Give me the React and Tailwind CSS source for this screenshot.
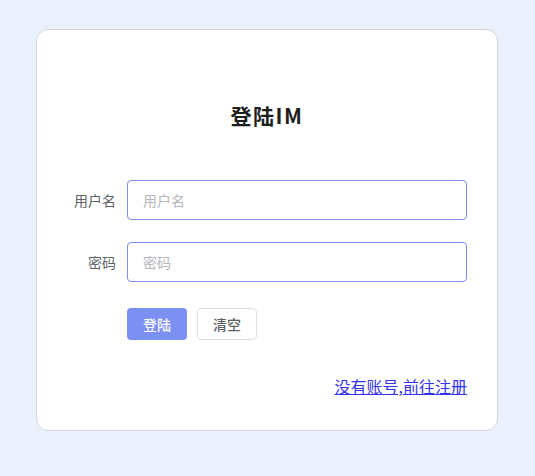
export default function App() {
  const font = { fontFamily: '"Noto Sans CJK SC", "Noto Sans", sans-serif' };
  return (
    <div className="w-[535px] h-[476px] bg-[#ebf0fd] pt-[29px] pl-[36px]" style={font}>
      <div className="w-[462px] h-[402px] bg-white border border-[#d3d6dd] rounded-[12px] px-[30px] pt-[70px]">
        <h1 className="text-center text-[21px] font-bold text-[#1f1f1f] leading-[30px] tracking-[1.5px]">登陆IM</h1>
        <div className="mt-[50px] flex flex-col gap-[22px]">
          <div className="flex items-center h-[40px]">
            <label className="w-[60px] pr-[11px] text-right text-[14px] text-[#606266]">用户名</label>
            <input
              className="flex-1 h-[40px] rounded-[4px] border border-[#7b8ff0] px-[15px] text-[14px] text-[#606266] outline-none placeholder:text-[#b4b7bd]"
              placeholder="用户名"
            />
          </div>
          <div className="flex items-center h-[40px]">
            <label className="w-[60px] pr-[11px] text-right text-[14px] text-[#606266]">密码</label>
            <input
              type="password"
              className="flex-1 h-[40px] rounded-[4px] border border-[#7b8ff0] px-[15px] text-[14px] text-[#606266] outline-none placeholder:text-[#b4b7bd]"
              placeholder="密码"
            />
          </div>
          <div className="flex items-center h-[40px] pl-[60px] gap-[10px]">
            <button className="w-[60px] h-[32px] rounded-[4px] bg-[#7c8ff2] text-white text-[14px] font-medium">登陆</button>
            <button className="w-[60px] h-[32px] rounded-[4px] bg-white border border-[#dcdfe6] text-[#606266] text-[14px] font-medium">清空</button>
          </div>
        </div>
        <div className="mt-[30px] flex justify-end">
          <a href="#" className="text-[16px] text-[#3333ee] underline leading-[24px]">没有账号,前往注册</a>
        </div>
      </div>
    </div>
  );
}
